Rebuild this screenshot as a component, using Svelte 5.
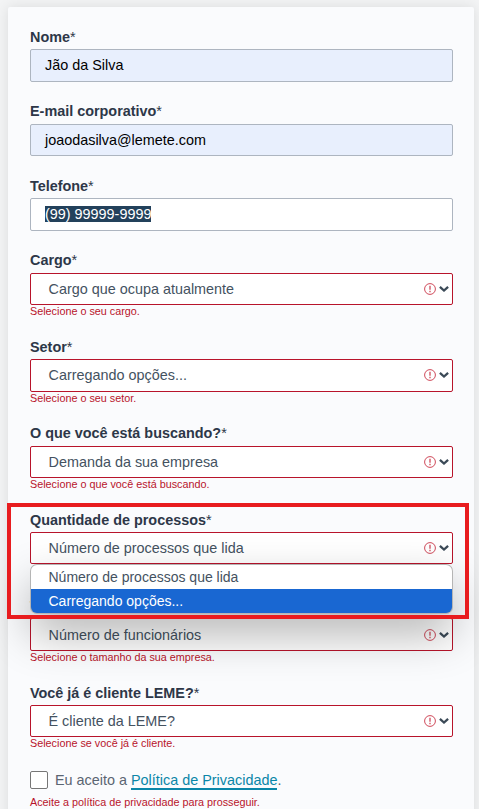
<script>
  const inputs = [
    { label: 'Nome', value: 'Jão da Silva', filled: true },
    { label: 'E-mail corporativo', value: 'joaodasilva@lemete.com', filled: true },
    { label: 'Telefone', value: '(99) 99999-9999', selected: true }
  ];
  const selects = [
    { label: 'Cargo', value: 'Cargo que ocupa atualmente', error: 'Selecione o seu cargo.' },
    { label: 'Setor', value: 'Carregando opções...', error: 'Selecione o seu setor.' },
    { label: 'O que você está buscando?', value: 'Demanda da sua empresa', error: 'Selecione o que você está buscando.' },
    {
      label: 'Quantidade de processos',
      value: 'Número de processos que lida',
      options: ['Número de processos que lida', 'Carregando opções...']
    },
    { label: 'Tamanho da empresa', value: 'Número de funcionários', error: 'Selecione o tamanho da sua empresa.' },
    { label: 'Você já é cliente LEME?', value: 'É cliente da LEME?', error: 'Selecione se você já é cliente.' }
  ];
</script>

<main>
  <form class="card">
    {#each inputs as f}
      <div class="field">
        <div class="label">{f.label}<span>*</span></div>
        <div class="box" class:filled={f.filled}>
          <span class="value" class:selected={f.selected}>{f.value}</span>
        </div>
      </div>
    {/each}
    {#each selects as f}
      <div class="field choice">
        <div class="label">{f.label}<span>*</span></div>
        <div class="box invalid">
          <span class="value">{f.value}</span>
          <svg class="alert" width="12" height="12" viewBox="0 0 12 12" fill="none" stroke="#cf4a5a">
            <circle cx="6" cy="6" r="5.4" stroke-width="1" />
            <path d="M6 2.8v4M6 7.8v1.4" stroke-width="1.3" />
          </svg>
          <svg class="chevron" width="10" height="6" viewBox="0 0 10 6" fill="none" stroke="#3b4a57" stroke-width="2.3">
            <path d="M.9.9L5 4.5L9.1.9" />
          </svg>
        </div>
        {#if !f.options}
          <div class="error">{f.error}</div>
        {:else}
          <div class="menu">
            {#each f.options as o, i}
              <div class="option" class:active={i === 1}>{o}</div>
            {/each}
          </div>
          <div class="highlight"></div>
        {/if}
      </div>
    {/each}
    <div class="consent">
      <span class="check"></span>
      <span>Eu aceito a <a href="#politica">Política de Privacidade</a>.</span>
    </div>
    <div class="error last">Aceite a política de privacidade para prosseguir.</div>
  </form>
</main>

<style>
  main {
    box-sizing: border-box;
    width: 479px;
    height: 809px;
    padding: 7px 5px 0 8px;
    overflow: hidden;
    background: #f3f4f5;
    font-family: 'Liberation Sans', Arial, sans-serif;
  }
  .card {
    box-sizing: border-box;
    height: 840px;
    padding: 19.95px 21px 0 22px;
    border-radius: 2px;
    background: #fafbfd;
    box-shadow: 0 0 14px rgba(0, 0, 0, 0.1);
  }
  .field {
    position: relative;
    height: 74.5px;
  }
  .choice {
    height: 86.45px;
  }
  .label {
    height: 22.25px;
    line-height: 20.6px;
    font-size: 14.4px;
    font-weight: 700;
    color: #2d3748;
    white-space: nowrap;
  }
  .label span {
    font-weight: 400;
  }
  .box {
    box-sizing: border-box;
    display: flex;
    align-items: center;
    height: 32.4px;
    padding: 0 14px;
    border: 1px solid #adb5c0;
    border-radius: 2px;
    background: #fff;
    color: #000;
    font-size: 14.4px;
    line-height: 16px;
    white-space: nowrap;
  }
  .filled {
    background: #e8effd;
  }
  .selected {
    background: #23415b;
    color: #fff;
  }
  .invalid {
    padding: 0 3px 0 17.5px;
    border-color: #b8142b;
    color: #44525f;
  }
  .invalid .value {
    flex: 1;
  }
  .chevron {
    margin-left: 3px;
  }
  .error {
    height: 13px;
    line-height: 13px;
    font-size: 10.8px;
    color: #b8142b;
    white-space: nowrap;
  }
  .menu {
    position: absolute;
    z-index: 1;
    top: 54.25px;
    left: 0;
    right: 0;
    box-sizing: border-box;
    height: 50px;
    padding: 1px;
    border-radius: 7px;
    background: #b5b5b5;
    box-shadow: 0 20px 45px rgba(0, 0, 0, 0.3);
  }
  .option {
    height: 24px;
    padding-left: 17.5px;
    border-radius: 6px 6px 0 0;
    background: #fff;
    color: #44525f;
    font-size: 14px;
    line-height: 24px;
  }
  .active {
    border-radius: 0 0 6px 6px;
    background: #1967d2;
    color: #fff;
  }
  .highlight {
    position: absolute;
    z-index: 2;
    top: -7.25px;
    left: -23px;
    right: -16px;
    height: 108px;
    border: 4px solid #e81c1f;
  }
  .consent {
    display: flex;
    align-items: center;
    gap: 7px;
    height: 20px;
    margin-top: 1.25px;
    font-size: 14.4px;
    color: #5a6572;
    white-space: nowrap;
  }
  .check {
    box-sizing: border-box;
    width: 18px;
    height: 18px;
    border: 1px solid #767676;
    border-radius: 2px;
    background: #fff;
  }
  a {
    color: #0a86a8;
    text-decoration: none;
    box-shadow: 0 2px 0 #0a86a8;
  }
  .last {
    margin-top: 6px;
  }
</style>
